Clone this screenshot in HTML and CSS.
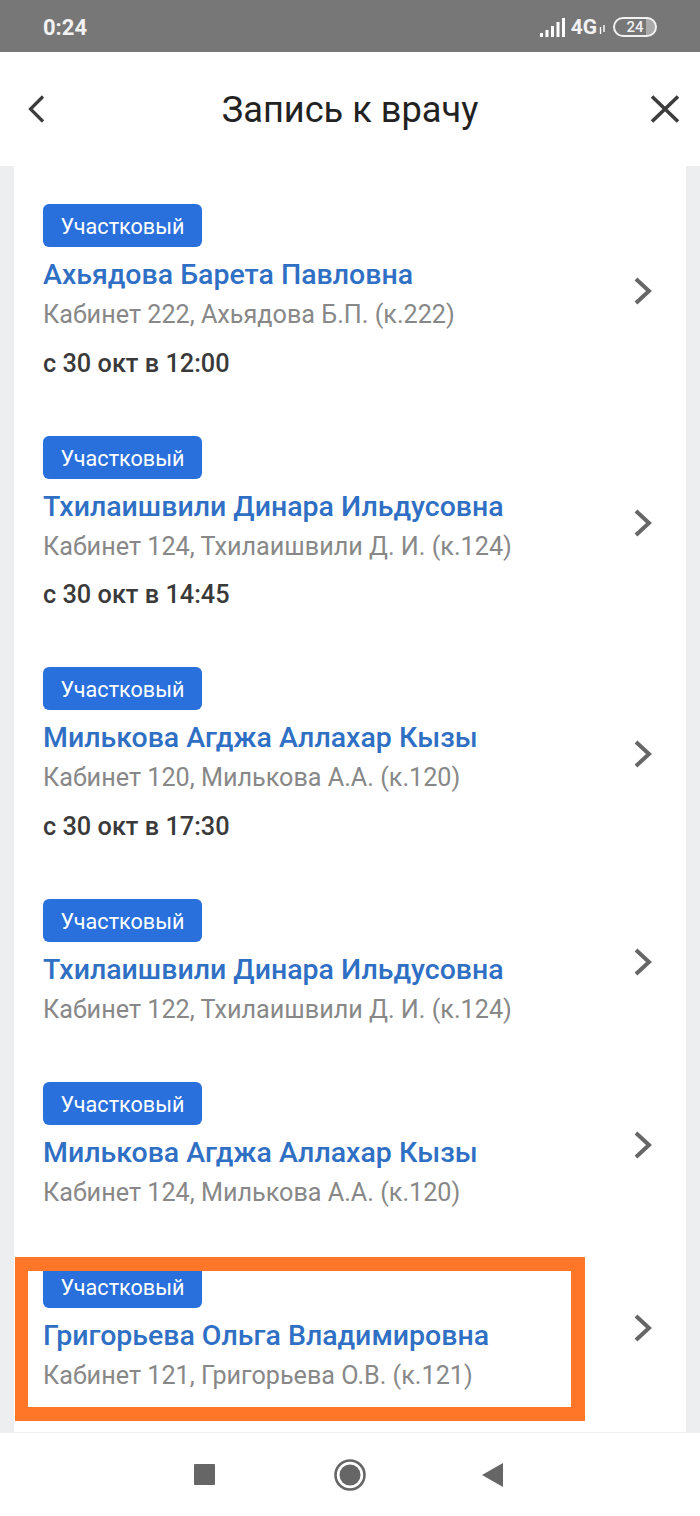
FILE: index.html
```html
<!DOCTYPE html>
<html lang="ru">
<head>
  <meta charset="UTF-8" />
  <meta name="viewport" content="width=device-width, initial-scale=1" />
  <title>Запись к врачу</title>
  <link rel="stylesheet" href="styles.css">
</head>
<body>

  <!-- Status bar -->
  <div class="status-bar">
    <span class="status-time">0:24</span>
    <div class="status-icons">
      <svg class="signal" width="25" height="19" viewBox="0 0 25 19">
        <rect x="0" y="15" width="3" height="4" fill="#fff" />
        <rect x="5.5" y="12" width="3" height="7" fill="#fff" />
        <rect x="11" y="8" width="3" height="11" fill="#fff" />
        <rect x="16.5" y="4" width="3" height="15" fill="#fff" />
        <rect x="22" y="0" width="3" height="19" fill="#fff" />
      </svg>
      <span class="network">4G</span>
      <svg class="arrows" width="7" height="9" viewBox="0 0 7 9">
        <path d="M1.5 9V2M5 0v7" stroke="#fff" stroke-width="1.4" fill="none" />
      </svg>
      <div class="battery"><span class="battery-level">24</span></div>
    </div>
  </div>

  <!-- Header -->
  <header class="top-bar">
    <svg class="top-icon" width="18" height="28" viewBox="0 0 18 28">
      <path d="M16 1.5L3.5 14L16 26.5" stroke="#3c3c3c" stroke-width="3.2" fill="none" />
    </svg>
    <h1 class="top-title">Запись к врачу</h1>
    <svg class="top-icon" width="30" height="28" viewBox="0 0 30 28">
      <path d="M2 1.5L28 26.5M28 1.5L2 26.5" stroke="#3c3c3c" stroke-width="3.6" fill="none" />
    </svg>
  </header>

  <!-- Doctors list -->
  <main class="content">
    <div class="doctor-list">
      <a class="doctor">
        <div class="doctor-info">
          <span class="badge">Участковый</span>
          <div class="doctor-name">Ахьядова Барета Павловна</div>
          <div class="doctor-room">Кабинет 222, Ахьядова Б.П. (к.222)</div>
          <div class="doctor-date">с 30 окт в 12:00</div>
        </div>
        <svg class="chevron" width="18" height="28" viewBox="0 0 18 28"><path d="M2 2l13 12L2 26" /></svg>
      </a>
      <a class="doctor">
        <div class="doctor-info">
          <span class="badge">Участковый</span>
          <div class="doctor-name">Тхилаишвили Динара Ильдусовна</div>
          <div class="doctor-room">Кабинет 124, Тхилаишвили Д. И. (к.124)</div>
          <div class="doctor-date">с 30 окт в 14:45</div>
        </div>
        <svg class="chevron" width="18" height="28" viewBox="0 0 18 28"><path d="M2 2l13 12L2 26" /></svg>
      </a>
      <a class="doctor">
        <div class="doctor-info">
          <span class="badge">Участковый</span>
          <div class="doctor-name">Милькова Агджа Аллахар Кызы</div>
          <div class="doctor-room">Кабинет 120, Милькова А.А. (к.120)</div>
          <div class="doctor-date">с 30 окт в 17:30</div>
        </div>
        <svg class="chevron" width="18" height="28" viewBox="0 0 18 28"><path d="M2 2l13 12L2 26" /></svg>
      </a>
      <a class="doctor">
        <div class="doctor-info">
          <span class="badge">Участковый</span>
          <div class="doctor-name">Тхилаишвили Динара Ильдусовна</div>
          <div class="doctor-room">Кабинет 122, Тхилаишвили Д. И. (к.124)</div>
        </div>
        <svg class="chevron" width="18" height="28" viewBox="0 0 18 28"><path d="M2 2l13 12L2 26" /></svg>
      </a>
      <a class="doctor">
        <div class="doctor-info">
          <span class="badge">Участковый</span>
          <div class="doctor-name">Милькова Агджа Аллахар Кызы</div>
          <div class="doctor-room">Кабинет 124, Милькова А.А. (к.120)</div>
        </div>
        <svg class="chevron" width="18" height="28" viewBox="0 0 18 28"><path d="M2 2l13 12L2 26" /></svg>
      </a>
      <a class="doctor">
        <div class="doctor-info">
          <span class="badge">Участковый</span>
          <div class="doctor-name">Григорьева Ольга Владимировна</div>
          <div class="doctor-room">Кабинет 121, Григорьева О.В. (к.121)</div>
        </div>
        <svg class="chevron" width="18" height="28" viewBox="0 0 18 28"><path d="M2 2l13 12L2 26" /></svg>
      </a>
    </div>
    <!-- Orange highlight drawn over the last doctor -->
    <div class="highlight"></div>
  </main>

  <!-- Android navigation -->
  <nav class="nav-bar">
    <svg class="nav-square" width="21" height="21" viewBox="0 0 21 21"><rect width="21" height="21" rx="1" fill="#666" /></svg>
    <svg width="32" height="32" viewBox="0 0 32 32">
      <circle cx="16" cy="16" r="14.5" fill="none" stroke="#666" stroke-width="2.6" />
      <circle cx="16" cy="16" r="10.5" fill="#666" />
    </svg>
    <svg width="21" height="24" viewBox="0 0 21 24"><path d="M21 0v24L0 12z" fill="#666" /></svg>
  </nav>

</body>
</html>
```

FILE: styles.css
```css
body {
  font-family: Roboto, "Liberation Sans", sans-serif;
  margin: 0;
  padding: 0;
  height: 1516px;
  overflow: hidden;
  display: flex;
  flex-direction: column;
  background: white;
}

/* Status bar */
.status-bar {
  height: 52px;
  background: #777;
  color: #f2f2f2;
  display: flex;
  justify-content: space-between;
  align-items: center;
  padding: 12px 43px 10px 43px;
  box-sizing: border-box;
  flex: none;
}

.status-time {
  font-size: 22px;
  font-weight: 700;
}

.status-icons {
  display: flex;
  align-items: center;
}

.network {
  font-size: 21px;
  font-weight: 700;
  margin-left: 6px;
}

.arrows {
  margin: 5px 7px 0 2px;
}

.battery {
  width: 40px;
  height: 16px;
  border: 2px solid #f2f2f2;
  border-radius: 10px;
  font-size: 15px;
  font-weight: 500;
  display: flex;
  align-items: center;
  justify-content: center;
  background: linear-gradient(to right, transparent 31px, #aaa 31px);
}

/* Header */
.top-bar {
  height: 114px;
  display: flex;
  justify-content: space-between;
  align-items: center;
  padding: 0 20px 0 27px;
  box-sizing: border-box;
  flex: none;
}

.top-title {
  font-size: 36.2px;
  font-weight: 400;
  color: #222;
  margin: 0 0 0 5px;
}

/* Doctors list */
.content {
  flex: 1;
  position: relative;
  background: white;
  margin: 0;
  border-left: 14px solid #eceef0;
  border-right: 14px solid #eceef0;
  overflow: hidden;
}

.doctor-list {
  padding: 38px 34px 0 29px;
  display: flex;
  flex-direction: column;
  gap: 57px;
}

.doctor {
  display: flex;
  justify-content: space-between;
  align-items: center;
}

.badge {
  display: block;
  width: fit-content;
  height: 43px;
  line-height: 45px;
  padding: 0 18px 0 17.5px;
  border-radius: 6px;
  background: #2a70dc;
  color: white;
  font-size: 21.6px;
}

.doctor-name {
  font-size: 28.5px;
  font-weight: 500;
  color: #2f6fc4;
  line-height: 40px;
  margin-top: 8px;
}

.doctor-room {
  font-size: 25.2px;
  color: #888;
  line-height: 30px;
  margin-top: 5px;
}

.doctor-date {
  font-size: 25.3px;
  font-weight: 500;
  color: #3a3a3a;
  line-height: 31.5px;
  margin-top: 17.5px;
  margin-bottom: -0.5px;
}

.chevron path {
  fill: none;
  stroke: #666;
  stroke-width: 4;
}

.highlight {
  position: absolute;
  left: 1px;
  top: 1091px;
  width: 543px;
  height: 136px;
  border: solid #ff7629;
  border-width: 14px 14px 14px 13px;
}

/* Android navigation */
.nav-bar {
  height: 84px;
  flex: none;
  display: flex;
  align-items: center;
  justify-content: center;
  gap: 116px;
  border-top: 1px solid #f0f0f0;
  box-sizing: border-box;
  padding-right: 3px;
}

.nav-square {
  margin-right: 3px;
}
```
